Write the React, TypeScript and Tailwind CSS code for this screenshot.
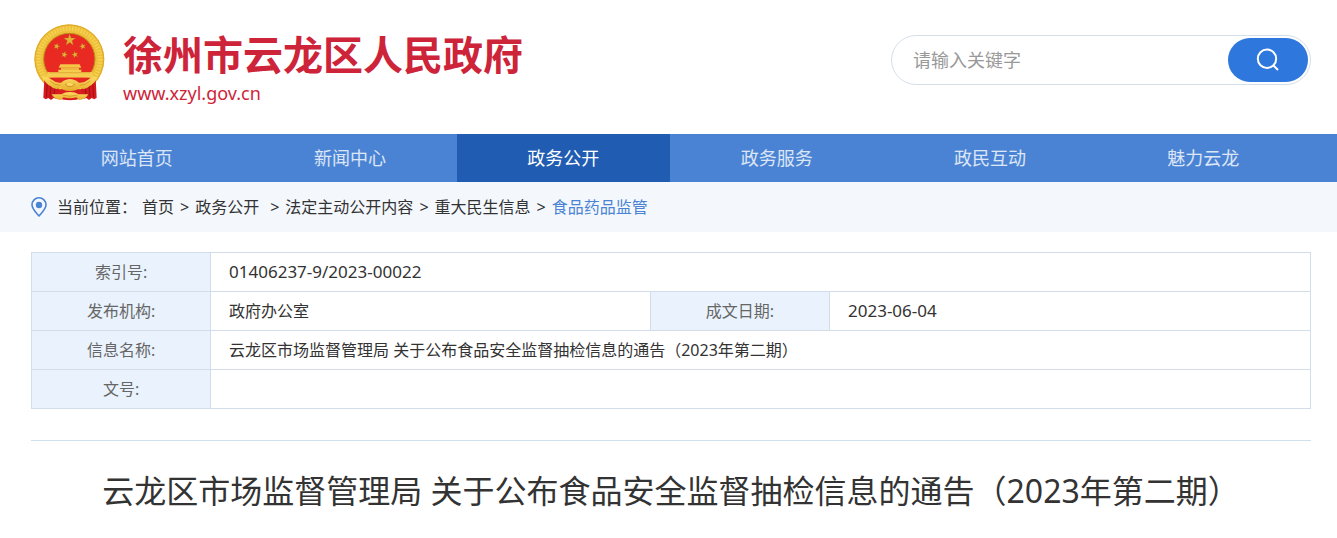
import React from 'react';

const TITLE = '云龙区市场监督管理局 关于公布食品安全监督抽检信息的通告（2023年第二期）';

const NAV_ITEMS = ['网站首页', '新闻中心', '政务公开', '政务服务', '政民互动', '魅力云龙'];
const ACTIVE_NAV = '政务公开';

const CRUMBS = ['首页', '政务公开', '法定主动公开内容', '重大民生信息'];

const STAR = 'M0 -10 L2.4 -3.2 L9.5 -3.1 L3.8 1.2 L5.9 8.1 L0 4 L-5.9 8.1 L-3.8 1.2 L-9.5 -3.1 L-2.4 -3.2 Z';

const Emblem: React.FC = () => (
  <svg className="h-[78px] w-[74px] shrink-0" viewBox="0 0 222 234" aria-hidden="true">
    <defs>
      <linearGradient id="gold" x1="0" y1="0" x2="0" y2="1">
        <stop offset="0%" stopColor="#ffdc62" />
        <stop offset="100%" stopColor="#e5ab2b" />
      </linearGradient>
    </defs>
    <circle cx="109" cy="106" r="105" fill="#eec03a" />
    <circle cx="109" cy="106" r="92" fill="none" stroke="#f6d354" strokeWidth="14" strokeDasharray="4 5" />
    <circle cx="109" cy="106" r="103" fill="none" stroke="#dda92c" strokeWidth="3" />
    <circle cx="109" cy="105" r="77" fill="#e82a22" stroke="#c08c1c" strokeWidth="3" />
    <g fill="#e2b233" stroke="#a9501a" strokeWidth="0.4">
      <path d={STAR} transform="translate(110 48) scale(1.9)" />
      <path d={STAR} transform="translate(71 67) rotate(15) scale(1.05)" />
      <path d={STAR} transform="translate(149 67) rotate(-15) scale(1.05)" />
      <path d={STAR} transform="translate(94 92) rotate(15) scale(1.05)" />
      <path d={STAR} transform="translate(126 92) rotate(-15) scale(1.05)" />
    </g>
    <path d="M82 121 h58 l5 10 h-68 Z" fill="#f5c548" />
    <path d="M84 131 h54 v7 h-54 Z" fill="#eab53a" />
    <path d="M76 137 h69 v7 h32 l5 17 h-143 l5 -17 h32 Z" fill="#f5cb50" />
    <path d="M48 146 h124" stroke="#d79a2a" strokeWidth="2" />
    <path d="M48 161 h124 l-14 22 h-96 Z" fill="#e32620" />
    <path d="M34 164 Q50 180 72 186 L84 206 L76 226 L62 222 L54 228 L46 222 L38 226 L31 221 Z" fill="#d41a1e" />
    <path d="M188 164 Q172 180 150 186 L138 206 L146 226 L160 222 L168 228 L176 222 L184 226 L191 221 Z" fill="#d41a1e" />
    <path d="M43 177 L40 220 M54 184 L51 220 M66 192 L62 216 M179 177 L182 220 M168 184 L171 220 M156 192 L160 216" stroke="#a30f15" strokeWidth="3" fill="none" />
    <path d="M78 196 H144 L148 222 Q111 236 74 222 Z" fill="#d91e20" />
    <path
      d="M28 158 Q46 158 58 168 Q70 178 84 176 L92 170 Q111 160 130 170 L138 176 Q152 178 164 168 Q176 158 194 158 Q186 178 170 186 Q154 202 138 190 L130 198 Q111 204 92 198 L84 190 Q68 202 52 186 Q36 178 28 158 Z"
      fill="url(#gold)"
    />
    <path d="M50 170 Q64 184 82 184 M172 170 Q158 184 140 184" stroke="#c98d20" strokeWidth="2" fill="none" />
    <path d="M94 181 Q111 171 128 181 Q120 190 111 190 Q102 190 94 181 Z" fill="#d99b24" />
    <path d="M99 180 Q111 174 123 180 L117 185 H105 Z" fill="#fbdc68" />
    <path d="M56 211 H85 Q95 204 111 204 Q127 204 137 211 H166 Q156 228 138 228 L130 220 Q111 226 92 220 L84 228 Q66 228 56 211 Z" fill="url(#gold)" />
    <path d="M88 213 Q111 221 134 213" stroke="#c98d20" strokeWidth="2" fill="none" />
  </svg>
);

const SearchIcon: React.FC = () => (
  <svg className="size-6" viewBox="0 0 24 24" fill="none" stroke="currentColor" strokeWidth="2" aria-hidden="true">
    <circle cx="11" cy="10.7" r="9.2" />
    <path d="M17.5 17.5 L22 22" />
  </svg>
);

const PinIcon: React.FC = () => (
  <svg className="h-5 w-4 shrink-0" viewBox="0 0 16 20" fill="none" aria-hidden="true">
    <path d="M8 19 C5.5 16 1 12 1 7.8 A7 7 0 0 1 15 7.8 C15 12 10.5 16 8 19 Z" stroke="#4a83d3" strokeWidth="1.6" strokeLinejoin="round" />
    <circle cx="8" cy="8" r="3.2" fill="#4a83d3" />
  </svg>
);

const Label: React.FC<{ children: React.ReactNode }> = ({ children }) => (
  <th scope="row" className="border border-[#d2dde9] bg-[#eaf3fd] text-center font-normal text-[#666]">
    {children}
  </th>
);

const Value: React.FC<{ span?: number; children?: React.ReactNode }> = ({ span, children }) => (
  <td colSpan={span} className="border border-[#d2dde9] px-[18px]">
    {children}
  </td>
);

export default function App() {
  return (
    <div className="bg-white font-['Noto_Sans','Noto_Sans_CJK_SC',sans-serif] text-base text-[#333]">
      <header className="flex h-[134px] items-start justify-between pr-[26px] pl-[33px]">
        <a href="#" className="flex items-start gap-4 pt-6 text-[#ce2439]">
          <Emblem />
          <span className="flex flex-col pt-0.5">
            <span className="text-[40px] leading-[58px] font-bold whitespace-nowrap">徐州市云龙区人民政府</span>
            <span className="text-lg leading-[18px]">www.xzyl.gov.cn</span>
          </span>
        </a>
        <form className="mt-[35px] flex h-[50px] w-[420px] items-center rounded-full border border-[#d5dfe9] pr-0.5 pl-[21px]">
          <input
            type="text"
            aria-label="请输入关键字"
            placeholder="请输入关键字"
            className="min-w-0 flex-1 text-lg outline-none placeholder:text-[#999]"
          />
          <button type="button" aria-label="搜索" className="flex h-11 w-20 items-center justify-center rounded-full bg-[#2e77dc] text-white">
            <SearchIcon />
          </button>
        </form>
      </header>

      <nav className="bg-[#4a83d3] pr-[27px] pl-[30px]">
        <ul className="grid grid-cols-6">
          {NAV_ITEMS.map((item) => (
            <li key={item}>
              <a
                href="#"
                className={`block text-center text-lg leading-[48px] ${item === ACTIVE_NAV ? 'bg-[#205db2] text-white' : 'text-white/80'}`}
              >
                {item}
              </a>
            </li>
          ))}
        </ul>
      </nav>

      <div className="flex h-[50px] items-center bg-[#f4f8fd] pl-[31px]">
        <PinIcon />
        <span className="ml-2.5">当前位置：</span>
        <div className="ml-[5px] flex gap-1.5">
          {CRUMBS.map((crumb) => (
            <React.Fragment key={crumb}>
              <a href="#">{crumb}</a>
              <span className={crumb === '政务公开' ? 'ml-[5px]' : ''}>&gt;</span>
            </React.Fragment>
          ))}
          <a href="#" className="text-[#4a83d3]">食品药品监管</a>
        </div>
      </div>

      <main className="pt-5 pr-[26px] pl-[31px]">
        <table className="w-full table-fixed border-collapse">
          <colgroup>
            <col className="w-[14%]" />
            <col />
            <col className="w-[14%]" />
            <col className="w-[481px]" />
          </colgroup>
          <tbody>
            <tr className="h-[39px]">
              <Label>索引号:</Label>
              <Value span={3}><span className="text-[17px]">01406237-9/2023-00022</span></Value>
            </tr>
            <tr className="h-[39px]">
              <Label>发布机构:</Label>
              <Value>政府办公室</Value>
              <Label>成文日期:</Label>
              <Value><span className="text-[17px]">2023-06-04</span></Value>
            </tr>
            <tr className="h-[39px]">
              <Label>信息名称:</Label>
              <Value span={3}>{TITLE}</Value>
            </tr>
            <tr className="h-[39px]">
              <Label>文号:</Label>
              <Value span={3} />
            </tr>
          </tbody>
        </table>
        <h1 className="mt-[31px] border-t border-[#cfdfeb] pt-[25px] text-center text-[32px] leading-[50px] font-normal">{TITLE}</h1>
      </main>
    </div>
  );
}
